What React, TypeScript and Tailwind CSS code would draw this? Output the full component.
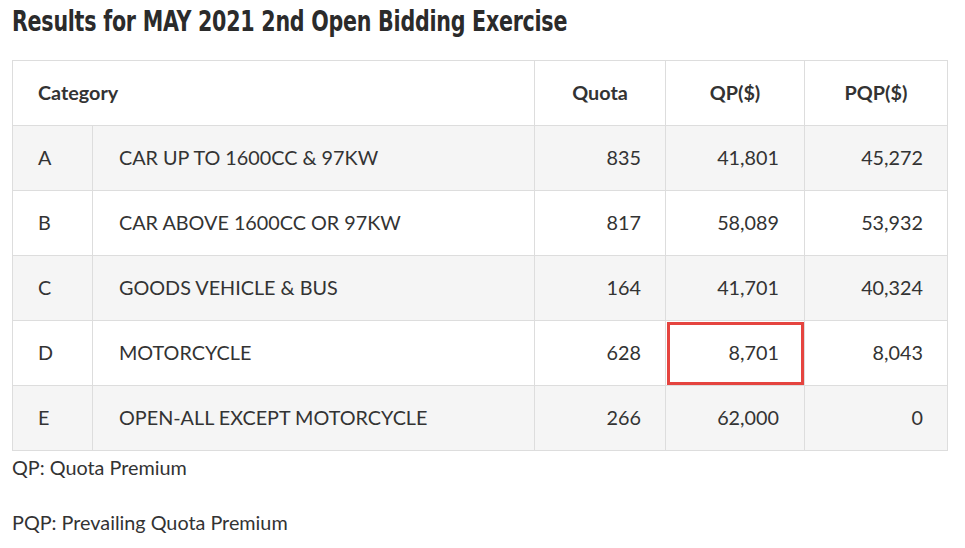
import React from 'react';

const rows = [
  { cat: 'A', desc: 'CAR UP TO 1600CC & 97KW', quota: '835', qp: '41,801', pqp: '45,272' },
  { cat: 'B', desc: 'CAR ABOVE 1600CC OR 97KW', quota: '817', qp: '58,089', pqp: '53,932' },
  { cat: 'C', desc: 'GOODS VEHICLE & BUS', quota: '164', qp: '41,701', pqp: '40,324' },
  { cat: 'D', desc: 'MOTORCYCLE', quota: '628', qp: '8,701', pqp: '8,043', mark: true },
  { cat: 'E', desc: 'OPEN-ALL EXCEPT MOTORCYCLE', quota: '266', qp: '62,000', pqp: '0' },
];

const App: React.FC = () => {
  return (
    <div className="bg-white text-[#333] px-3 pt-[4px] font-['Lato','Liberation_Sans',sans-serif] min-h-[548px]">
      <h1 className="text-[28px] leading-[36px] font-bold tracking-[-0.3px] text-[#2b2b2b] font-['DejaVu_Sans_Condensed','Roboto',sans-serif] mb-[20px] [transform:scaleX(0.818)] origin-left whitespace-nowrap">
        Results for MAY 2021 2nd Open Bidding Exercise
      </h1>
      <table className="w-[935px] border-collapse text-[19.8px] table-fixed">
        <colgroup>
          <col className="w-[80px]" />
          <col className="w-[442px]" />
          <col className="w-[131px]" />
          <col className="w-[139px]" />
          <col className="w-[143px]" />
        </colgroup>
        <thead>
          <tr className="h-[65px]">
            <th colSpan={2} className="border border-[#dddddd] text-left font-bold px-[25px]">Category</th>
            <th className="border border-[#dddddd] text-center font-bold">Quota</th>
            <th className="border border-[#dddddd] text-center font-bold">QP($)</th>
            <th className="border border-[#dddddd] text-center font-bold">PQP($)</th>
          </tr>
        </thead>
        <tbody>
          {rows.map((r, i) => (
            <tr key={r.cat} className={`h-[65px] ${i % 2 === 0 ? 'bg-[#f5f5f5]' : 'bg-white'}`}>
              <td className="border border-[#dddddd] px-[25px]">{r.cat}</td>
              <td className="border border-[#dddddd] px-[26px]">{r.desc}</td>
              <td className="border border-[#dddddd] text-right px-[24px]">{r.quota}</td>
              <td className="border border-[#dddddd] text-right px-[25px] relative">
                {r.mark && (
                  <span className="absolute left-[1px] right-[0px] top-[1px] bottom-[0px] border-[3px] border-[#e5443f]" />
                )}
                {r.qp}
              </td>
              <td className="border border-[#dddddd] text-right px-[24px]">{r.pqp}</td>
            </tr>
          ))}
        </tbody>
      </table>
      <p className="text-[19.8px] leading-[32px] mt-[0px]">QP: Quota Premium</p>
      <p className="text-[19.8px] leading-[32px] mt-[23px]">PQP: Prevailing Quota Premium</p>
    </div>
  );
};

export default App;
